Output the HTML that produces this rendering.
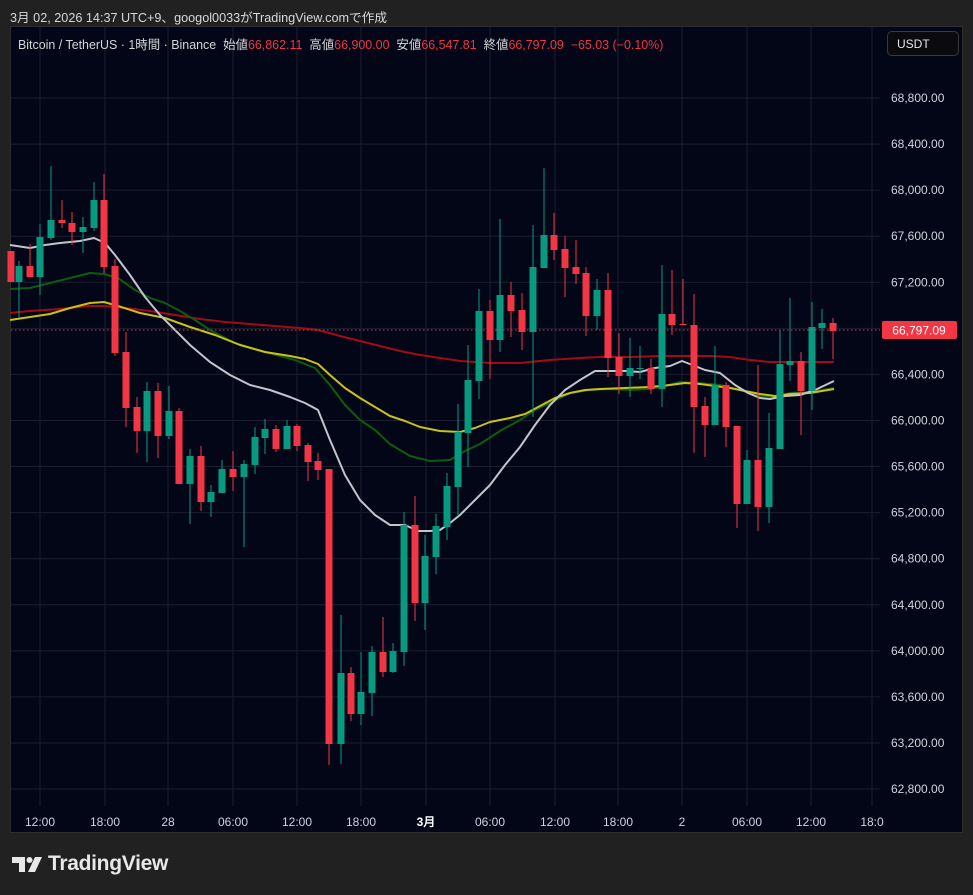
<!DOCTYPE html>
<html><head><meta charset="utf-8">
<style>
html,body{margin:0;padding:0;background:#212121;width:973px;height:895px;overflow:hidden;font-family:"Liberation Sans","Noto Sans CJK JP",sans-serif;}
.top{position:absolute;left:10px;top:7px;color:#d8d8d8;font-size:12.65px;}
.panel{position:absolute;left:10px;top:26px;width:953px;height:807px;background:#020617;border:1px solid #2e2e2e;box-sizing:border-box;}
.legend{position:absolute;left:18px;top:35px;font-size:12.45px;color:#d6d6d6;white-space:nowrap;}
.legend .r{color:#f23645;}
.usdt{position:absolute;left:887px;top:31px;width:72px;height:25px;border:1px solid #3a3a3a;border-radius:5px;background:#0b0b0f;color:#e6e6e6;font-size:12px;line-height:25px;box-sizing:border-box;padding-left:9px;}
svg{position:absolute;left:0;top:0;}
.logo{position:absolute;left:48px;top:852px;color:#e8e8e8;font-size:21px;font-weight:bold;letter-spacing:-0.3px;}
</style></head><body>
<div class="top">3月 02, 2026 14:37 UTC+9、googol0033がTradingView.comで作成</div>
<div class="panel"></div>
<svg width="973" height="895" id="s">
<g stroke="#1a1f2e" stroke-width="1" id="grid"></g>
<g id="ma"></g>
<g id="c"></g>
<line x1="11" y1="330" x2="880" y2="330" stroke="#f23645" stroke-width="1" stroke-dasharray="1.5,2.5"/>
<g id="pl" fill="#d1d4dc" font-size="12" font-family="Liberation Sans"></g>
<rect x="882" y="321" width="75" height="18" rx="2" fill="#f23645"/>
<text x="919" y="334.5" fill="#fff" font-size="12" text-anchor="middle" font-family="Liberation Sans">66,797.09</text>
<g id="tl" fill="#d1d4dc" font-size="12" font-family="Liberation Sans" text-anchor="middle"></g>
<g fill="#e8e8e8">
<path d="M12 857h13v15h-6v-9h-7z"/>
<circle cx="29.5" cy="860" r="3"/>
<path d="M35 857h7l-7 15h-7z"/>
</g>
</svg>
<div class="legend">Bitcoin / TetherUS · 1時間 · Binance &nbsp;始値<span class="r">66,862.11</span> &nbsp;高値<span class="r">66,900.00</span> &nbsp;安値<span class="r">66,547.81</span> &nbsp;終値<span class="r">66,797.09 &nbsp;−65.03 (−0.10%)</span></div>
<div class="usdt">USDT</div>
<div class="logo">TradingView</div>
<script>
var NS="http://www.w3.org/2000/svg";
function el(p,t,a,txt){var e=document.createElementNS(NS,t);for(var k in a)e.setAttribute(k,a[k]);if(txt)e.textContent=txt;document.getElementById(p).appendChild(e);}
var prices=["68,800.00","68,400.00","68,000.00","67,600.00","67,200.00","66,800.00","66,400.00","66,000.00","65,600.00","65,200.00","64,800.00","64,400.00","64,000.00","63,600.00","63,200.00","62,800.00"];
for(var i=0;i<16;i++){var y=98+i*46.07;el("grid","line",{x1:11,x2:880,y1:y,y2:y});if(i!=5)el("pl","text",{x:891,y:y+4},prices[i]);}
var tx=[40,105,168,233,297,361,426,490,555,618,682,747,811,872],tt=["12:00","18:00","28","06:00","12:00","18:00","3月","06:00","12:00","18:00","2","06:00","12:00","18:0"];
for(var i=0;i<tx.length;i++){el("grid","line",{x1:tx[i],x2:tx[i],y1:27,y2:806});var a={x:tx[i],y:826};if(tt[i]=="3月"){a["font-weight"]="bold";a.fill="#fff";}el("tl","text",a,tt[i]);}
var ma=[["#a50a14","10,313 30,311 60,309 90,306 104,306 125,308 150,311 175,315 200,319 225,322 250,324 275,326 300,328 318,330 340,336 360,341 380,346 400,351 420,355 440,358 460,361 490,363 520,363 550,360 580,358 600,357 630,357 660,356 690,356 710,356 730,357 750,360 770,362 790,362 810,362 834,362"],
["#0d5c0d","10,289 30,288 50,283 70,278 90,273 104,274 118,278 135,290 150,298 165,303 180,311 195,320 210,330 235,343 265,352 295,360 315,368 330,385 345,405 360,420 375,430 390,444 400,450 410,456 430,461 450,460 465,451 480,444 500,431 520,420 535,410 550,403 570,393 590,390 610,389 630,390 650,389 665,386 680,382 700,383 720,385 740,390 760,396 775,397 790,393 810,392 834,388"],
["#c9c214","10,320 30,317 50,314 70,308 90,303 104,302 118,306 140,313 165,318 190,327 215,335 240,345 265,352 290,356 305,359 318,364 330,375 345,388 360,398 375,407 390,416 405,421 420,427 440,431 460,432 475,428 490,422 510,418 525,414 540,406 555,398 570,393 585,390 600,389 625,388 650,387 670,385 685,383 700,384 715,386 730,388 745,391 760,394 775,396 790,394 810,393 834,389"],
["#c4c4cc","10,245 30,248 45,245 60,243 80,241 94,238 105,243 115,255 130,275 145,297 160,315 175,330 190,345 210,362 230,375 250,385 270,390 290,397 305,403 318,410 330,440 345,475 360,500 375,515 390,525 405,525 418,531 430,531 440,530 450,523 460,515 475,500 490,485 505,465 520,447 535,425 550,405 565,390 580,380 595,371 610,371 625,371 640,372 655,368 670,366 682,361 695,366 705,370 720,373 735,385 748,393 760,398 770,399 785,396 800,395 815,390 834,381"]];
ma.forEach(function(m){el("ma","polyline",{points:m[1],fill:"none",stroke:m[0],"stroke-width":2,"stroke-linejoin":"round"});});
var C=[[11,251,282,251,282,0],[19,266,282,261,318,1],[30,266,277,244,277,0],[40,237,277,224,295,1],[51,220,238,166,240,1],[62,220,223,200,228,0],[72,223,232,212,245,0],[83,227,232,217,253,1],[94,200,228,182,231,1],[104,200,267,174,273,0],[115,266,353,259,356,0],[126,352,408,332,427,0],[137,407,431,397,453,0],[147,391,431,382,462,1],[158,391,436,383,458,0],[169,411,436,386,439,1],[179,411,484,408,484,0],[190,456,484,449,524,1],[201,456,502,446,511,0],[211,492,502,485,517,1],[222,469,493,460,493,1],[233,469,477,451,491,0],[244,464,477,460,547,1],[255,437,465,427,474,1],[265,429,438,419,454,1],[276,429,449,425,452,0],[287,426,449,420,449,1],[297,426,446,424,451,0],[308,445,462,443,481,0],[318,461,470,453,480,0],[329,469,744,469,765,0],[341,673,744,615,764,1],[351,673,714,667,721,0],[361,692,714,652,725,1],[372,652,693,646,716,1],[383,652,672,617,677,0],[393,651,672,643,673,1],[404,525,652,512,666,1],[415,525,603,496,621,0],[425,556,603,535,630,1],[436,526,557,514,574,1],[447,486,527,473,540,1],[458,432,487,404,515,1],[468,380,433,345,467,1],[479,311,381,289,399,1],[490,311,340,300,379,0],[500,295,340,219,352,1],[511,295,311,282,337,0],[522,310,332,293,350,0],[533,267,332,225,417,1],[544,235,268,168,268,1],[554,235,250,213,260,0],[565,249,268,236,297,0],[576,267,274,240,284,0],[586,273,316,267,336,0],[597,290,316,279,330,1],[608,290,358,273,377,0],[619,357,376,333,394,0],[630,368,376,338,397,1],[640,368,369,346,379,1],[651,368,389,359,394,0],[662,314,389,265,407,1],[672,314,325,270,335,0],[683,324,325,279,325,0],[694,325,407,294,453,0],[705,406,425,397,457,0],[715,385,425,346,425,1],[726,385,427,382,447,0],[737,426,504,426,528,0],[747,460,504,450,504,1],[758,460,507,365,531,0],[769,448,507,413,523,1],[780,364,449,330,449,1],[790,361,365,298,381,1],[801,361,391,352,435,0],[812,327,391,302,410,1],[822,323,328,309,349,1],[833,323,331,318,359,0]];
C.forEach(function(c){var col=c[5]?"#089981":"#f23645";el("c","line",{x1:c[0],x2:c[0],y1:c[3],y2:c[4],stroke:col,"stroke-width":1});el("c","rect",{x:c[0]-3.5,y:c[1],width:7,height:Math.max(1,c[2]-c[1]),fill:col});});
</script>
</body></html>
